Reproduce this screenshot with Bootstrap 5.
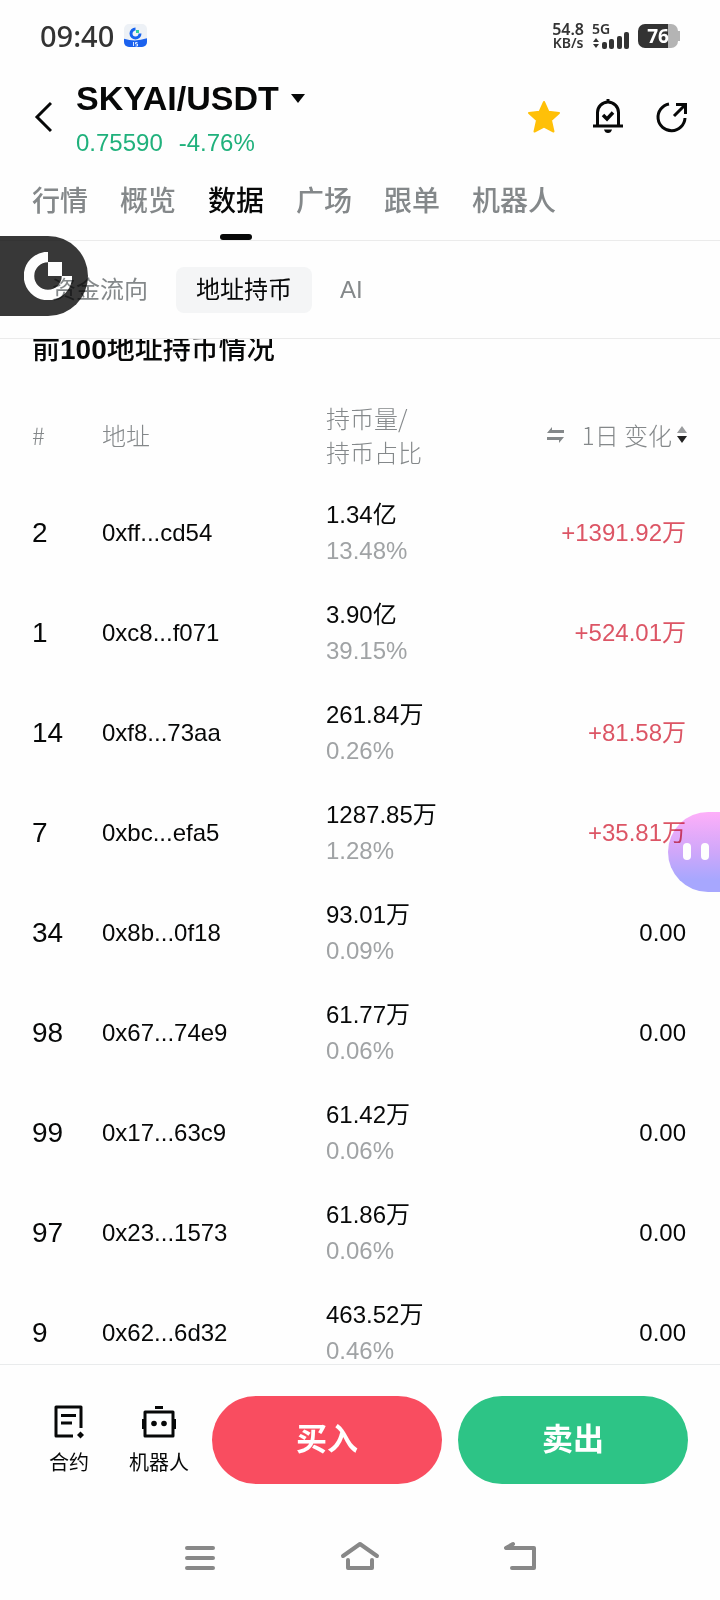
<!DOCTYPE html>
<html lang="zh-CN">
<head>
<meta charset="utf-8">
<meta name="viewport" content="width=device-width, initial-scale=1">
<title>SKYAI/USDT</title>
<link href="https://cdn.jsdelivr.net/npm/bootstrap@5.3.0/dist/css/bootstrap.min.css" rel="stylesheet">
<script src="https://cdn.jsdelivr.net/npm/bootstrap@5.3.0/dist/js/bootstrap.bundle.min.js" defer></script>
<style>
  body { font-family: "Liberation Sans", "Noto Sans CJK SC", sans-serif; font-size: 24px; line-height: 36px; color: #070808; background: #fefefe; }
  a { color: inherit; text-decoration: none; }
  svg { display: block; flex: none; }
  .icon-btn { border: 0; background: none; padding: 0; color: inherit; line-height: 24px; }
  .side-pad { padding-left: 32px; padding-right: 32px; }
  .muted { color: #84888a; }
  .faint { color: #a0a3a5; }
  .up { color: #dc5565; }

  .status { height: 72px; padding: 0 40px; color: #333; font-family: "Noto Sans", sans-serif; }
  .clock { font-size: 29px; font-weight: 500; }
  .net { font-size: 14px; line-height: 14px; font-weight: 600; text-align: center; }
  .net .speed { font-size: 16px; }
  .battery { width: 40px; height: 24px; border-radius: 7px; background: linear-gradient(90deg, #333 75%, #b4b4b4 75%); color: #fff; font-size: 19px; line-height: 24px; font-weight: 700; text-align: center; }
  .battery-tip { width: 2px; height: 10px; background: #b4b4b4; }

  .pair-head { height: 90px; }
  .pair-name { font-size: 34px; line-height: 48px; font-weight: 700; margin: 0; }
  .pair-text { padding-top: 4px; }
  .pair-price { color: #20b17c; line-height: 42px; gap: 16px; }

  .main-tabs { height: 79px; gap: 32px; border-bottom: 1px solid #ebebeb; font-size: 28px; font-weight: 500; color: #84888a; }
  .main-tabs a { padding-top: 22px; line-height: 36px; position: relative; }
  .main-tabs .active { color: #070808; }
  .main-tabs .active::after { content: ""; position: absolute; bottom: 0; left: 50%; width: 32px; height: 6px; margin-left: -16px; border-radius: 3px; background: #070808; }
  .sub-tabs { height: 98px; gap: 8px; border-bottom: 1px solid #ebebeb; color: #84888a; }
  .sub-tabs a { padding: 5px 20px; border-radius: 8px; }
  .sub-tabs .active { background: #f4f5f6; color: #070808; }

  .feed { min-height: 0; overflow-y: auto; scrollbar-width: none; }
  .feed::-webkit-scrollbar { display: none; }
  .feed h2 { font-size: 28px; line-height: 40px; font-weight: 500; margin: -9px 0 17px; }
  .holders { table-layout: fixed; width: 100%; }
  .holders th { height: 96px; line-height: 34px; font-weight: 300; font-family: "Noto Sans CJK SC", sans-serif; }
  .holders td { height: 100px; }
  .holders th, .holders td { padding: 0; vertical-align: middle; }
  .holders td.text-end { padding-right: 2px; }
  .holders .icon-btn { font-weight: 300; }
  .c-rank { width: 70px; }
  .c-addr { width: 224px; }
  .rank { font-size: 28px; }

  .trade-bar { border-top: 1px solid #e9ebec; padding: 31px 32px 30px 24px; }
  .tool { width: 90px; font-size: 20px; line-height: 28px; gap: 10px; }
  .trade-btn { height: 88px; border: 0; border-radius: 44px; color: #fff; font-size: 31px; font-weight: 700; }
  .buy { background: #f94d60; margin-left: 8px; margin-right: 16px; }
  .sell { background: #2dc486; }
  .sys-nav { height: 86px; gap: 120px; color: #888; }
  .sys-nav button { width: 40px; }

  .float-logo { position: absolute; left: 0; top: 236px; width: 88px; height: 80px; border-radius: 0 40px 40px 0; background: #383838; mix-blend-mode: multiply; padding: 0 0 0 24px; }
  .float-bot { position: absolute; right: 0; top: 812px; width: 52px; height: 80px; border-radius: 40px 0 0 40px; background: linear-gradient(#ffb0fa, #d0a8fb 50%, #a8a8ff 85%); mix-blend-mode: multiply; padding: 0 0 0 15px; }
</style>
</head>
<body class="vh-100 d-flex flex-column position-relative overflow-hidden">

<div class="status flex-shrink-0 d-flex align-items-center justify-content-between">
  <div class="d-flex align-items-center gap-2">
    <span class="clock">09:40</span>
    <svg width="26" height="26" viewBox="0 0 26 26">
      <defs><clipPath id="app"><rect x="2" y="1" width="23" height="23" rx="5"/></clipPath></defs>
      <g clip-path="url(#app)">
        <rect width="26" height="26" fill="#edf1f6"/>
        <path d="M0 15Q12.500 20 26 15V26H0Z" fill="#1b62ee"/>
        <path d="M13.500 6A4.500 4.500 0 1 0 18 10.500" fill="none" stroke="#1563ef" stroke-width="3"/>
        <rect x="14" y="7" width="3" height="3" fill="#2fd0a0"/>
        <path d="M11.500 19V23M15.500 19.500H13.500V21H15.500V23H13.500" stroke="#dbe8ff" stroke-width="1" fill="none"/>
      </g>
    </svg>
  </div>
  <div class="d-flex align-items-center">
    <div class="net me-1"><div class="speed">54.8</div><div>KB/s</div></div>
    <div class="net text-start ms-1">
      <div>5G</div>
      <svg width="38" height="14" viewBox="0 0 38 14" overflow="visible" fill="#333">
        <path d="M1 6L4 2L7 6ZM1 8H7L4 12Z"/>
        <rect x="10" y="6" width="5" height="7" rx="2"/><rect x="17" y="3" width="5" height="10" rx="2"/><rect x="25" y="0" width="5" height="13" rx="2"/><rect x="32" y="-4" width="5" height="17" rx="2"/>
      </svg>
    </div>
    <div class="battery ms-2">76</div><div class="battery-tip"></div>
  </div>
</div>

<header class="pair-head flex-shrink-0 side-pad d-flex align-items-center">
  <button class="icon-btn me-4" aria-label="返回">
    <svg width="20" height="32" viewBox="0 0 20 32"><path d="M19 2L5 16L19 30" fill="none" stroke="currentColor" stroke-width="3"/></svg>
  </button>
  <div class="pair-text flex-grow-1">
    <div class="d-flex align-items-center gap-2">
      <h1 class="pair-name">SKYAI/USDT</h1>
      <svg width="20" height="12" viewBox="0 0 20 12"><path d="M4 2H18L11 11Z" fill="#070808"/></svg>
    </div>
    <div class="pair-price d-flex"><span>0.75590</span><span>-4.76%</span></div>
  </div>
  <div class="d-flex gap-4">
    <button class="icon-btn me-1" aria-label="收藏">
      <svg width="36" height="36" viewBox="0 0 36 36"><path d="M18 3L22.500 12.800L33 14L25 21.300L27.500 32.500L18 27.500L8.500 32.500L11 21.300L3 14L13.500 12.800Z" fill="#ffc008" stroke="#ffc008" stroke-width="2" stroke-linejoin="round"/></svg>
    </button>
    <button class="icon-btn me-1" aria-label="提醒">
      <svg width="36" height="36" viewBox="0 0 36 36" fill="none" stroke="currentColor" stroke-width="3"><path d="M18 0V4M7.500 27V13.500A10.500 10.500 0 0 1 28.500 13.500V27M3 27H33"/><path d="M13 16L17 20L23 13.500" stroke-width="3.500"/><path d="M14 30.500H22Q21 34 18 34Q15 34 14 30.500Z" fill="currentColor" stroke="none"/></svg>
    </button>
    <button class="icon-btn" aria-label="分享">
      <svg width="34" height="36" viewBox="0 0 34 36" fill="none" stroke="currentColor" stroke-width="3"><path d="M15 5A13.500 13.500 0 1 0 31 19M20 17L31 6M22 5.500H31.500V15"/></svg>
    </button>
  </div>
</header>

<nav class="main-tabs flex-shrink-0 side-pad d-flex">
  <a href="#">行情</a><a href="#">概览</a><a href="#" class="active">数据</a><a href="#">广场</a><a href="#">跟单</a><a href="#">机器人</a>
</nav>
<nav class="sub-tabs flex-shrink-0 side-pad d-flex align-items-center">
  <a href="#">资金流向</a><a href="#" class="active">地址持币</a><a href="#">AI</a>
</nav>

<main class="feed side-pad flex-grow-1">
  <h2>前<span class="fw-bold">100</span>地址持币情况</h2>
  <table class="holders">
    <thead>
      <tr class="muted">
        <th class="c-rank">#</th>
        <th class="c-addr">地址</th>
        <th>持币量/<br>持币占比</th>
        <th>
          <button class="icon-btn d-flex align-items-center ms-auto">
            <svg class="me-3" width="20" height="20" viewBox="0 0 20 20" fill="#84888a"><path d="M1 8L6 2V5H18V8ZM18 12H1V15H13V18Z"/></svg>
            <span>1日 变化</span>
            <svg class="ms-1" width="12" height="20" viewBox="0 0 12 20"><path d="M1 8L6 1L11 8Z" fill="#9a9c9e"/><path d="M1 11H11L6 18Z" fill="#222"/></svg>
          </button>
        </th>
      </tr>
    </thead>
    <tbody>
      <tr><td class="rank">2</td><td>0xff...cd54</td><td>1.34亿<div class="faint">13.48%</div></td><td class="text-end up">+1391.92万</td></tr>
      <tr><td class="rank">1</td><td>0xc8...f071</td><td>3.90亿<div class="faint">39.15%</div></td><td class="text-end up">+524.01万</td></tr>
      <tr><td class="rank">14</td><td>0xf8...73aa</td><td>261.84万<div class="faint">0.26%</div></td><td class="text-end up">+81.58万</td></tr>
      <tr><td class="rank">7</td><td>0xbc...efa5</td><td>1287.85万<div class="faint">1.28%</div></td><td class="text-end up">+35.81万</td></tr>
      <tr><td class="rank">34</td><td>0x8b...0f18</td><td>93.01万<div class="faint">0.09%</div></td><td class="text-end">0.00</td></tr>
      <tr><td class="rank">98</td><td>0x67...74e9</td><td>61.77万<div class="faint">0.06%</div></td><td class="text-end">0.00</td></tr>
      <tr><td class="rank">99</td><td>0x17...63c9</td><td>61.42万<div class="faint">0.06%</div></td><td class="text-end">0.00</td></tr>
      <tr><td class="rank">97</td><td>0x23...1573</td><td>61.86万<div class="faint">0.06%</div></td><td class="text-end">0.00</td></tr>
      <tr><td class="rank">9</td><td>0x62...6d32</td><td>463.52万<div class="faint">0.46%</div></td><td class="text-end">0.00</td></tr>
    </tbody>
  </table>
</main>

<footer class="flex-shrink-0">
  <div class="trade-bar d-flex align-items-center">
    <button class="icon-btn tool d-flex flex-column align-items-center">
      <svg width="34" height="36" viewBox="0 0 34 36" fill="none" stroke="currentColor" stroke-width="3"><path d="M21 33H4V4H29V25" stroke-linejoin="round"/><path d="M9 12.500H24M9 20H20"/><path d="M28.500 28.500L32 32L28.500 35.500L25 32Z" fill="currentColor" stroke="none"/></svg>
      <span>合约</span>
    </button>
    <button class="icon-btn tool d-flex flex-column align-items-center">
      <svg width="36" height="36" viewBox="0 0 36 36" fill="none" stroke="currentColor" stroke-width="3"><path d="M4 9H32V33H4Z" stroke-linejoin="round"/><path d="M14 4.500H22M2.500 16V26M33.500 16V26"/><circle cx="13" cy="20.500" r="2.800" fill="currentColor" stroke="none"/><circle cx="23" cy="20.500" r="2.800" fill="currentColor" stroke="none"/></svg>
      <span>机器人</span>
    </button>
    <button class="trade-btn buy flex-fill">买入</button>
    <button class="trade-btn sell flex-fill">卖出</button>
  </div>
  <div class="sys-nav d-flex align-items-center justify-content-center">
    <button class="icon-btn" aria-label="菜单"><svg width="40" height="32" viewBox="0 0 40 32" stroke="currentColor" stroke-width="4" stroke-linecap="round"><path d="M7 7H33M7 17H33M7 27H33"/></svg></button>
    <button class="icon-btn" aria-label="主页"><svg width="40" height="32" viewBox="0 0 40 32" fill="none" stroke="currentColor" stroke-width="4" stroke-linecap="round" stroke-linejoin="round"><path d="M3 15L20 3L37 15M8 19V27H32V19"/></svg></button>
    <button class="icon-btn" aria-label="后退"><svg width="40" height="32" viewBox="0 0 40 32" fill="none" stroke="currentColor" stroke-width="4" stroke-linecap="round" stroke-linejoin="round"><path d="M13 3L6 7H34V27H12"/></svg></button>
  </div>
</footer>

<button class="icon-btn float-logo" aria-label="悬浮窗">
  <svg width="48" height="48" viewBox="0 0 48 48"><path d="M24 5A19 19 0 1 0 43 24" fill="none" stroke="#fff" stroke-width="10.500"/><path d="M24 10H38V24H24Z" fill="#fff"/></svg>
</button>
<button class="icon-btn float-bot" aria-label="智能助手">
  <svg width="28" height="18" viewBox="0 0 28 18" fill="#fff"><rect width="8" height="17" rx="4"/><rect x="18" width="8" height="17" rx="4"/></svg>
</button>
</body>
</html>
